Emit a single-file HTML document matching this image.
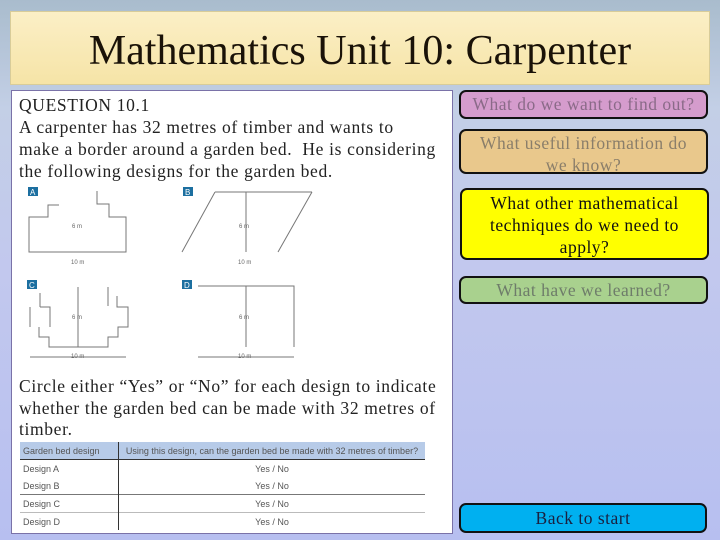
<!DOCTYPE html>
<html><head><style>
body{margin:0;width:720px;height:540px;overflow:hidden;position:relative;font-family:"Liberation Serif",serif;
background:linear-gradient(180deg,#a9bccd 0%,#c3cfe6 20%,#c2c8ee 50%,#b7bff0 100%);}
.title{position:absolute;left:10px;top:11px;width:698px;height:72px;background:linear-gradient(180deg,#fbefc6,#f6e4a7);border:1px solid #d8cc99;
font-size:42px;text-align:center;line-height:78px;color:#1a1208;letter-spacing:0px;white-space:nowrap}
.left{position:absolute;left:11px;top:90px;width:440px;height:442px;background:#fff;border:1px solid #7a72a8;}
.q{position:absolute;left:7px;font-size:17.5px;line-height:22px;color:#222;letter-spacing:0.65px;white-space:nowrap}
.btn{position:absolute;border:2px solid #111;border-radius:7px;text-align:center;font-size:17.5px;line-height:22px;box-sizing:border-box;letter-spacing:0.5px;white-space:nowrap}
table{position:absolute;left:8px;top:351px;width:405px;border-collapse:collapse;font-family:"Liberation Sans",sans-serif;font-size:9px;color:#555}
td{height:17px;padding:0 3px}
</style></head><body>
<div class="title">Mathematics Unit 10: Carpenter</div>
<div class="left">
<div class="q" style="top:3px">QUESTION 10.1<br>A carpenter has 32 metres of timber and wants to<br>make a border around a garden bed.&nbsp; He is considering<br>the following designs for the garden bed.</div>
<svg style="position:absolute;left:0;top:94px" width="440" height="180" viewBox="11 184 440 180" fill="none" stroke="#777" stroke-width="1">
<rect x="27" y="186" width="10" height="9" fill="#1c6fa0" stroke="none"/><text x="29" y="194" font-size="8" fill="#fff" stroke="none" font-family="Liberation Sans">A</text>
<rect x="182" y="186" width="10" height="9" fill="#1c6fa0" stroke="none"/><text x="184" y="194" font-size="8" fill="#fff" stroke="none" font-family="Liberation Sans">B</text>
<rect x="26" y="279" width="10" height="9" fill="#1c6fa0" stroke="none"/><text x="28" y="287" font-size="8" fill="#fff" stroke="none" font-family="Liberation Sans">C</text>
<rect x="181" y="279" width="10" height="9" fill="#1c6fa0" stroke="none"/><text x="183" y="287" font-size="8" fill="#fff" stroke="none" font-family="Liberation Sans">D</text>
<path d="M58 204H47V216H28V251H125V216H108V203H96V190"/>
<path d="M214 191H311M214 191L181 251M311 191L277 251M245 191V251"/>
<path d="M39 306H49V326M39 306V292M29 306V326M38 326V336H48V346H107V336H117V326H127V306H116V295M107 286V305M117 336V335M77 286V346"/>
<path d="M197 285H293V346M245 285V346M29 356H125M197 356H293"/>
<g fill="#666" stroke="none" font-size="6" font-family="Liberation Sans"><text x="71" y="227">6 m</text><text x="238" y="227">6 m</text><text x="71" y="318">6 m</text><text x="238" y="318">6 m</text><text x="70" y="263">10 m</text><text x="237" y="263">10 m</text><text x="70" y="357">10 m</text><text x="237" y="357">10 m</text></g>
</svg>
<div class="q" style="top:285px;line-height:21.5px">Circle either “Yes” or “No” for each design to indicate<br>whether the garden bed can be made with 32 metres of<br>timber.</div>
<table>
<tr style="background:#b7cbe8"><td style="border-right:1px solid #333;width:92px">Garden bed design</td><td style="text-align:center">Using this design, can the garden bed be made with 32 metres of timber?</td></tr>
<tr style="border-top:1px solid #333"><td style="border-right:1px solid #333">Design A</td><td style="text-align:center">Yes / No</td></tr>
<tr><td style="border-right:1px solid #333">Design B</td><td style="text-align:center">Yes / No</td></tr>
<tr style="border-top:1px solid #777"><td style="border-right:1px solid #333">Design C</td><td style="text-align:center">Yes / No</td></tr>
<tr style="border-top:1px solid #bbb"><td style="border-right:1px solid #333">Design D</td><td style="text-align:center">Yes / No</td></tr>
</table>
</div>
<div class="btn" style="left:459px;top:90px;width:249px;height:29px;background:#d59ccd;color:#8a6a88;line-height:25px">What do we want to find out?</div>
<div class="btn" style="left:459px;top:129px;width:249px;height:45px;background:#e9c88c;color:#8a7e6a;padding-top:1px">What useful information do<br>we know?</div>
<div class="btn" style="left:460px;top:188px;width:249px;height:72px;background:#ffff00;color:#111;padding-top:2px">What other mathematical<br>techniques do we need to<br>apply?</div>
<div class="btn" style="left:459px;top:276px;width:249px;height:28px;background:#a9d18e;color:#6e7c6a;line-height:24px">What have we learned?</div>
<div class="btn" style="left:459px;top:503px;width:248px;height:30px;background:#00b0f0;color:#1a2040;line-height:26px">Back to start</div>
</body></html>
